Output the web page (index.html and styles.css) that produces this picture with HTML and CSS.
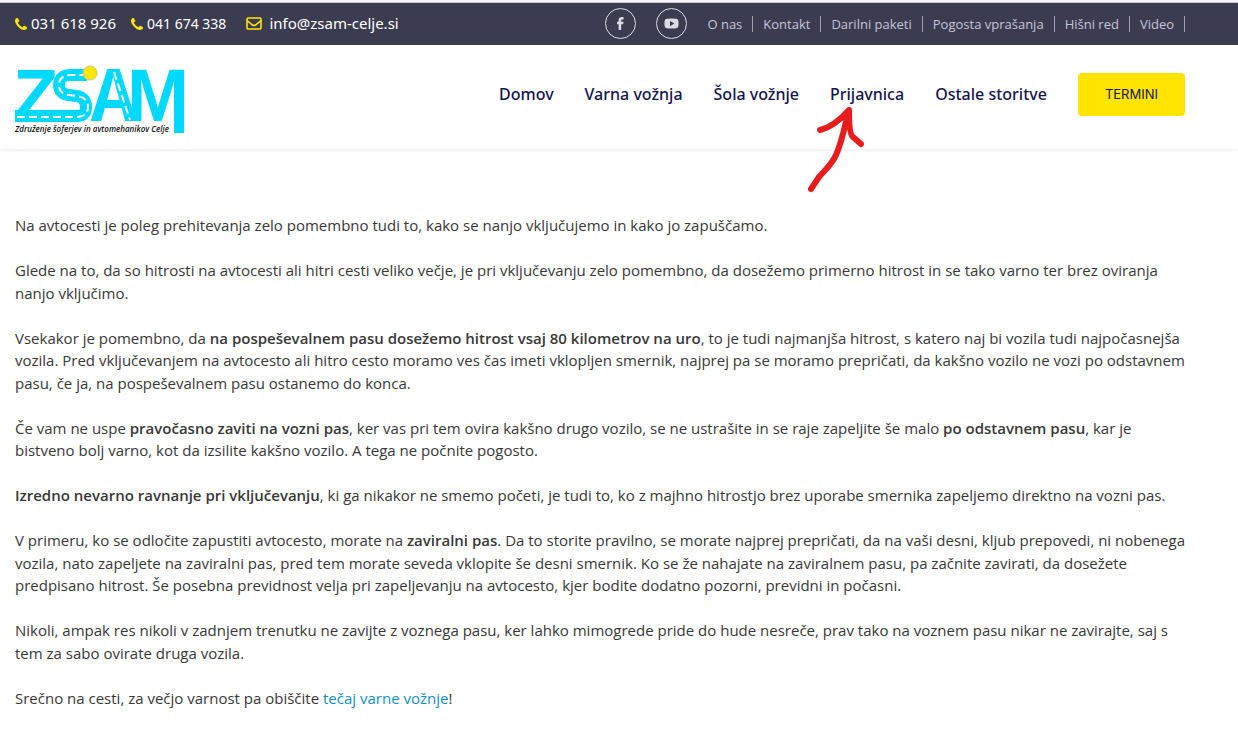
FILE: index.html
```html
<!DOCTYPE html>
<html lang="sl">
<head>
<meta charset="utf-8">
<meta name="viewport" content="width=device-width, initial-scale=1">
<title>ZSAM Celje</title>
<link rel="stylesheet" href="styles.css">
</head>
<body>
<svg class="symbols" aria-hidden="true">
  <symbol id="phone" viewBox="0 0 1408 1408"><path d="M1408 1112q0 27-10 70.500t-21 68.500q-21 50-122 106-94 51-186 51-27 0-53-3.500t-57.500-12.500-47-14.500-55.500-20.500-49-18q-98-35-175-83-127-79-264-216t-216-264q-48-77-83-175-3-9-18-49t-20.500-55.500-14.500-47-12.500-57.500-3.500-53q0-92 51-186 56-101 106-122 25-11 68.500-21t70.500-10q14 0 21 3 18 6 53 76 11 19 30 54t35 63.500 31 53.500q3 4 17.500 25t21.500 35.500 7 28.500q0 20-28.500 50t-62 55-62 53-28.500 46q0 9 5 22.500t8.500 20.500 14 24 11.500 19q76 137 174 235t235 174q2 1 19 11.500t24 14 20.500 8.500 22.500 5q18 0 46-28.500t53-62 55-62 50-28.500q14 0 28.500 7t35.500 21.500 25 17.500q25 15 53.500 31t63.500 35 54 30q70 35 76 53 3 7 3 21z"/></symbol>
</svg>

<div class="topbar">
  <div class="contacts">
    <a class="contact" href="tel:031618926"><svg class="phone-icon" aria-hidden="true"><use href="#phone"/></svg>031 618 926</a>
    <a class="contact contact-small" href="tel:041674338"><svg class="phone-icon" aria-hidden="true"><use href="#phone"/></svg>041 674 338</a>
    <a class="contact contact-mail" href="mailto:info@zsam-celje.si"><svg class="mail-icon" viewBox="0 0 16 13" aria-hidden="true"><rect x="1" y="1" width="14" height="11" rx="1"/><path d="M1 3.500L6.500 8Q8 9 9.500 8L15 3.500"/></svg>info@zsam-celje.si</a>
  </div>
  <div class="topright">
    <a class="social" href="#" aria-label="Facebook"><svg viewBox="0 0 16 16" aria-hidden="true"><path d="M11.300 1.200v2.400H9.900c-1 0-1.200.5-1.200 1.200v1.400h2.500l-.4 2.500H8.700V15H6V8.700H4.300V6.200H6V4.400C6 2.200 7.300 1 9.300 1c.9 0 1.700.1 2 .2z"/></svg></a>
    <a class="social" href="#" aria-label="YouTube"><svg viewBox="0 0 16 16" aria-hidden="true"><path fill-rule="evenodd" d="M3 3Q8 2.400 13 3Q15.300 3.200 15.400 5.500Q15.600 8 15.400 10.500Q15.300 12.800 13 13Q8 13.600 3 13Q.7 12.800.6 10.500Q.4 8 .6 5.500Q.7 3.200 3 3zM6.400 5.200v5.600L11 8z"/></svg></a>
    <nav class="toplinks" aria-label="Dodatni meni">
      <a href="#">O nas</a><a href="#">Kontakt</a><a href="#">Darilni paketi</a><a href="#">Pogosta vprašanja</a><a href="#">Hišni red</a><a href="#">Video</a>
    </nav>
  </div>
</div>

<header class="header">
  <a class="logo" href="#" aria-label="ZSAM">
    <svg viewBox="0 0 170 70" aria-hidden="true">
      <g class="logo-letters">
        <text x="-2" y="57">Z</text>
        <text class="logo-a" x="76" y="57">A</text>
        <text x="112" y="57">M</text>
      </g>
      <rect x="159" y="6" width="10" height="63" fill="#00d9ff"/>
      <path class="road" d="M0 52H62Q71 52 71 43Q71 33 61 32L54 31Q44 30 44 21Q44 11 56 11H72"/>
      <path class="road-line" d="M2 53H63Q73 52 73 43Q73 33 61 32L54 31Q44 30 44 21Q44 11 56 11H68"/>
      <path class="road-line" d="M99 8L115 56"/>
      <circle cx="75" cy="9" r="7" fill="#ffe600" stroke="#c9c48a"/>
      <text class="tagline" x="0" y="68">Združenje šoferjev in avtomehanikov Celje</text>
    </svg>
  </a>
  <nav class="mainnav" aria-label="Glavni meni">
    <a href="#">Domov</a>
    <a href="#">Varna vožnja</a>
    <a href="#">Šola vožnje</a>
    <a class="marked" href="#">Prijavnica
      <svg class="arrow" viewBox="0 0 60 90" aria-hidden="true"><path d="M6 83L14 71C22 62 27 58 31 49C37 36 40 19 44 4C37 12 27 21 15 24M44 4C44 17 45 29 48 31L56 38"/></svg>
    </a>
    <a href="#">Ostale storitve</a>
    <a class="cta" href="#">TERMINI</a>
  </nav>
</header>

<main class="article">
  <p>Na avtocesti je poleg prehitevanja zelo pomembno tudi to, kako se nanjo vključujemo in kako jo zapuščamo.</p>
  <p>Glede na to, da so hitrosti na avtocesti ali hitri cesti veliko večje, je pri vključevanju zelo pomembno, da dosežemo primerno hitrost in se tako varno ter brez oviranja nanjo vključimo.</p>
  <p>Vsekakor je pomembno, da <strong>na pospeševalnem pasu dosežemo hitrost vsaj 80 kilometrov na uro</strong>, to je tudi najmanjša hitrost, s katero naj bi vozila tudi najpočasnejša vozila. Pred vključevanjem na avtocesto ali hitro cesto moramo ves čas imeti vklopljen smernik, najprej pa se moramo prepričati, da kakšno vozilo ne vozi po odstavnem pasu, če ja, na pospeševalnem pasu ostanemo do konca.</p>
  <p>Če vam ne uspe <strong>pravočasno zaviti na vozni pas</strong>, ker vas pri tem ovira kakšno drugo vozilo, se ne ustrašite in se raje zapeljite še malo <strong>po odstavnem pasu</strong>, kar je bistveno bolj varno, kot da izsilite kakšno vozilo. A tega ne počnite pogosto.</p>
  <p><strong>Izredno nevarno ravnanje pri vključevanju</strong>, ki ga nikakor ne smemo početi, je tudi to, ko z majhno hitrostjo brez uporabe smernika zapeljemo direktno na vozni pas.</p>
  <p>V primeru, ko se odločite zapustiti avtocesto, morate na <strong>zaviralni pas</strong>. Da to storite pravilno, se morate najprej prepričati, da na vaši desni, kljub prepovedi, ni nobenega vozila, nato zapeljete na zaviralni pas, pred tem morate seveda vklopite še desni smernik. Ko se že nahajate na zaviralnem pasu, pa začnite zavirati, da dosežete predpisano hitrost. Še posebna previdnost velja pri zapeljevanju na avtocesto, kjer bodite dodatno pozorni, previdni in počasni.</p>
  <p>Nikoli, ampak res nikoli v zadnjem trenutku ne zavijte z voznega pasu, ker lahko mimogrede pride do hude nesreče, prav tako na voznem pasu nikar ne zavirajte, saj s tem za sabo ovirate druga vozila.</p>
  <p>Srečno na cesti, za večjo varnost pa obiščite <a href="#">tečaj varne vožnje</a>!</p>
</main>
</body>
</html>
```
FILE: styles.css
```css
* { box-sizing: border-box; }

body {
  margin: 0;
  background: #fff;
  color: #383838;
  font: 15px/1.5 "Open Sans", "Noto Sans", sans-serif;
}

a { text-decoration: none; }

.symbols { display: none; }

.topbar {
  display: flex;
  justify-content: space-between;
  align-items: center;
  height: 45px;
  padding: 0 53px 0 15px;
  border-top: 2px solid #f3f3f5;
  background: #3c3c50;
  box-shadow: inset 0 1px #c9cad0;
}

.contacts, .contact, .topright, .toplinks, .mainnav {
  display: flex;
  align-items: center;
}

.contacts { gap: 15px; }

.contact {
  gap: 4px;
  color: #fff;
  font-family: "Noto Sans", sans-serif;
  font-size: 15px;
  white-space: nowrap;
}

.contact-small { font-size: 14px; }

.contact-mail { gap: 7px; margin-left: 5px; }

.phone-icon { width: 12px; height: 12px; fill: #ffe600; }

.mail-icon {
  width: 16px;
  height: 13px;
  fill: none;
  stroke: #ffe600;
  stroke-width: 1.600;
}

.topright { gap: 20px; }

.social {
  display: grid;
  place-items: center;
  width: 31px;
  height: 31px;
  border: 1px solid #dcdce6;
  border-radius: 50%;
}

.social svg { width: 15px; height: 15px; fill: #dcdce6; }

.toplinks a {
  padding-right: 10px;
  border-right: 1px solid #a0a0ae;
  color: #c4c4da;
  font-size: 13px;
  line-height: 16px;
  white-space: nowrap;
}

.toplinks a + a { padding-left: 10px; }

.header {
  display: flex;
  justify-content: space-between;
  align-items: center;
  min-height: 104px;
  padding: 0 53px 0 15px;
  box-shadow: 0 1px 4px rgba(0, 0, 0, 0.08);
}

.logo { margin-top: 4px; }

.logo svg { display: block; width: 170px; height: 70px; overflow: visible; }

.logo-letters {
  fill: #00d9ff;
  font: bold 74px "Liberation Sans", Arial, sans-serif;
}

.logo-a { font: bold 70px "Noto Sans CJK JP", sans-serif; }

.road { fill: none; stroke: #00d9ff; stroke-width: 12; }

.road-line {
  fill: none;
  stroke: #fff;
  stroke-width: 2;
  stroke-dasharray: 8 4;
}

.tagline {
  fill: #111;
  font: italic 600 8px "Open Sans", sans-serif;
}

.mainnav { gap: 31px; margin-bottom: 6px; }

.mainnav a {
  color: #151550;
  font-family: "Noto Sans", sans-serif;
  font-size: 16px;
  font-weight: 500;
  white-space: nowrap;
}

.marked { position: relative; }

/* Hand-drawn pointer below the menu item */
.arrow {
  position: absolute;
  top: 24px;
  left: -25px;
  width: 60px;
  height: 90px;
  fill: none;
  stroke: #e81c1c;
  stroke-width: 6;
  stroke-linecap: round;
  stroke-linejoin: round;
}

.mainnav .cta {
  padding: 11px 27px;
  border-radius: 4px;
  background: #ffe400;
  font: 13px/21px Inter, sans-serif;
}

.article { padding: 65px 53px 20px 15px; }

.article p { margin: 0 0 1.5em; }

.article strong { font-weight: 600; }

.article a { color: #1190c8; }
```
